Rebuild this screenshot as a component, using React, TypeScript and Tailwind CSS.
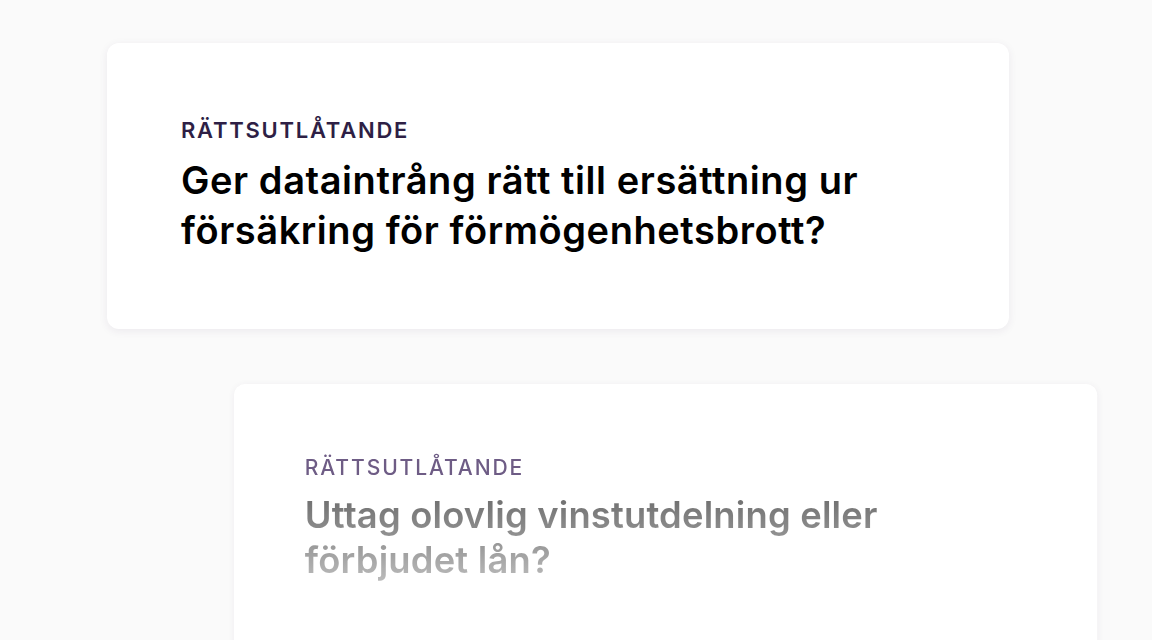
export default function App() {
  return (
    <div className="h-[640px] w-[1152px] overflow-hidden bg-[#fafafa] font-['Inter','Liberation_Sans',sans-serif]">
      {/* Front card */}
      <div className="ml-[107px] mt-[43px] h-[286px] w-[902px] rounded-xl bg-white shadow-[0_2px_8px_rgba(60,40,90,0.08)] pl-[74px] pt-[74px]">
        <p className="text-[22px] font-semibold leading-[26px] tracking-[0.08em] text-[#2e1f45]">
          RÄTTSUTLÅTANDE
        </p>
        <h2 className="mt-[12px] text-[38px] font-semibold leading-[50px] tracking-[0.015em] text-black">
          Ger dataintrång rätt till ersättning ur
          <br />
          försäkring för förmögenhetsbrott?
        </h2>
      </div>

      {/* Next card, slightly smaller and faded */}
      <div className="ml-[234px] mt-[55px] h-[300px] w-[902px] origin-top-left scale-[0.957] rounded-xl bg-white shadow-[0_2px_8px_rgba(60,40,90,0.06)] pl-[74px] pt-[74px]">
        <p className="text-[22px] font-medium leading-[26px] tracking-[0.09em] text-[#6e5c85]">
          RÄTTSUTLÅTANDE
        </p>
        <h2 className="mt-[12px] bg-gradient-to-b from-[#6a6a6a] to-[#bdbdbd] bg-clip-text text-[38px] font-semibold leading-[48px] tracking-[0.005em] text-transparent">
          Uttag olovlig vinstutdelning eller
          <br />
          förbjudet lån?
        </h2>
      </div>
    </div>
  )
}
